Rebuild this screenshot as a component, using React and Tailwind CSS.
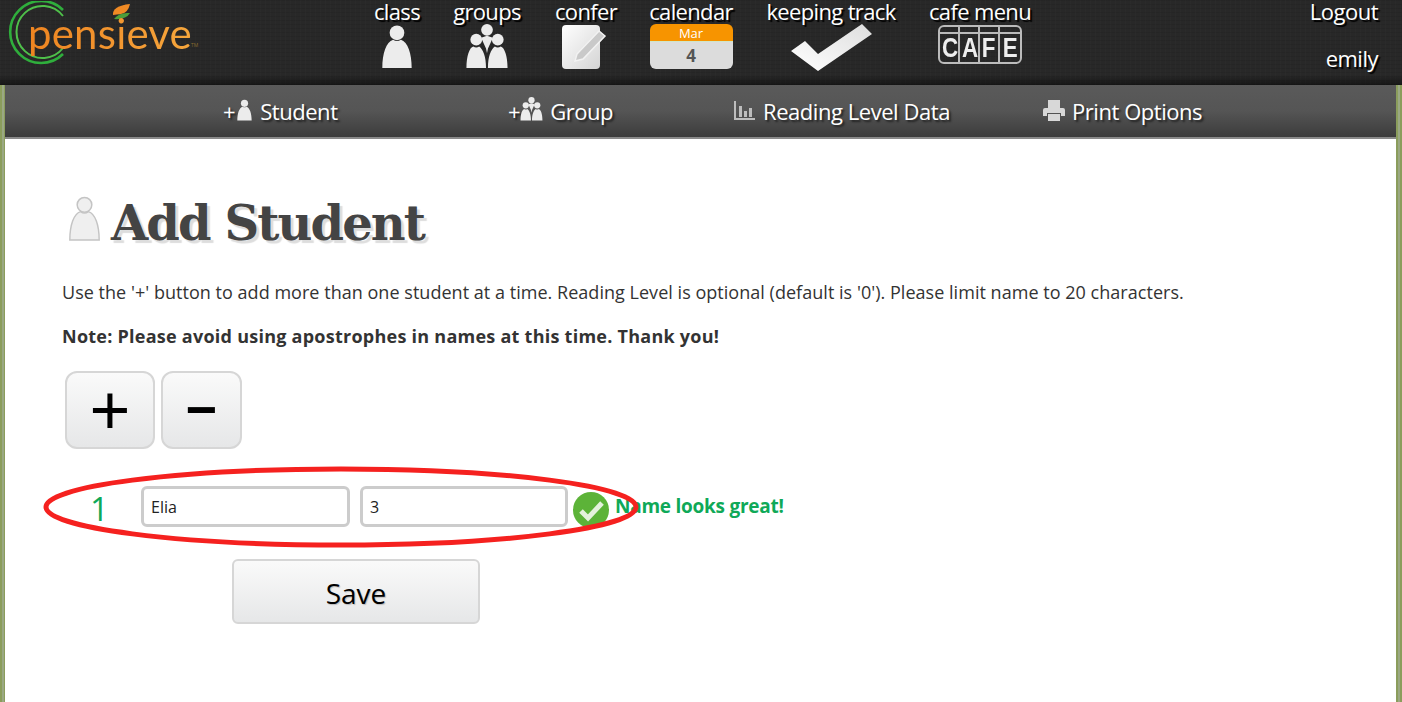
import React from 'react';

const Person = ({ className, fill = '#ececec', stroke = 'none' }) => (
    <svg viewBox="0 0 32 46" className={className}>
        <circle cx="16" cy="9" r="7.5" fill={fill} stroke={stroke} strokeWidth="1.5" />
        <path d="M1 45 C1 30 5 18 12 16 Q16 19 20 16 C27 18 31 30 31 45 Z" fill={fill} stroke={stroke} strokeWidth="1.5" />
    </svg>
);

const Group = ({ className }) => (
    <svg viewBox="0 0 44 46" className={className} fill="#ececec">
        <circle cx="22" cy="6" r="6" />
        <circle cx="11" cy="16" r="6" />
        <circle cx="33" cy="16" r="6" />
        <path d="M16 14 L22 12 L28 14 L23 25 L22 30 L21 25 Z" />
        <path d="M1 45 C1 33 4 24 8 23 Q11 25 14 23 C18 26 21 33 21 45 Z" />
        <path d="M23 45 C23 33 26 26 30 23 Q33 25 36 23 C40 24 43 33 43 45 Z" />
    </svg>
);

const Note = () => (
    <svg viewBox="0 0 48 46" className="w-[48px] h-[46px]">
        <defs>
            <linearGradient id="noteFill" x1="0" y1="0" x2="1" y2="1">
                <stop offset="0" stopColor="#ffffff" />
                <stop offset="1" stopColor="#d4d4d4" />
            </linearGradient>
        </defs>
        <rect x="0" y="1" width="38" height="44" rx="4" fill="url(#noteFill)" />
        <path d="M15 30 L37 7 L43 12 L21 35 L13 37 Z" fill="#c9c9c9" stroke="#f2f2f2" strokeWidth="1.5" />
    </svg>
);

const Check = () => (
    <svg viewBox="0 0 82 48" className="w-[82px] h-[48px]">
        <defs>
            <linearGradient id="checkFill" x1="0" y1="1" x2="1" y2="0">
                <stop offset="0" stopColor="#ffffff" />
                <stop offset="1" stopColor="#dedede" />
            </linearGradient>
        </defs>
        <path d="M1 27 L15 17 L28 30 L72 0 L82 10 L28 47 Z" fill="url(#checkFill)" />
    </svg>
);

const CafeSign = () => (
    <div className="w-[84px] h-[39px] rounded-md border-2 border-[#bbb] flex flex-col overflow-hidden mt-[1px] [text-shadow:none]">
        <div className="h-[7px] grid grid-cols-4 border-b-2 border-[#bbb]">
            <span className="border-r-2 border-[#bbb]" />
            <span className="border-r-2 border-[#bbb]" />
            <span className="border-r-2 border-[#bbb]" />
            <span />
        </div>
        <div className="flex-1 grid grid-cols-4 text-[#eee] text-[28px] leading-[27px] font-bold text-center font-['Liberation_Sans',sans-serif]">
            <span className="border-r-2 border-[#bbb]"><span className="inline-block scale-x-[0.8]">C</span></span>
            <span className="border-r-2 border-[#bbb]"><span className="inline-block scale-x-[0.8]">A</span></span>
            <span className="border-r-2 border-[#bbb]"><span className="inline-block scale-x-[0.8]">F</span></span>
            <span><span className="inline-block scale-x-[0.8]">E</span></span>
        </div>
    </div>
);

const CalendarTile = () => (
    <div className="w-[83px] h-[45px] rounded-md overflow-hidden flex flex-col text-center [text-shadow:none]">
        <div className="h-[18px] bg-[#f79400] border-b border-[#cfe6c8] text-white text-[13px] leading-[18px]">Mar</div>
        <div className="flex-1 bg-[#dcdcdc] text-[#555] text-[17px] leading-[27px] font-bold">4</div>
    </div>
);

const navItems = [
    { label: 'class', width: 'w-[80px]', icon: <Person className="w-[32px] h-[45px]" /> },
    { label: 'groups', width: 'w-[100px]', icon: <Group className="w-[44px] h-[45px]" /> },
    { label: 'confer', width: 'w-[98px]', icon: <Note /> },
    { label: 'calendar', width: 'w-[112px]', icon: <CalendarTile /> },
    { label: 'keeping track', width: 'w-[168px]', icon: <Check /> },
    { label: 'cafe menu', width: 'w-[130px]', icon: <CafeSign /> },
];

const BarChart = () => (
    <svg viewBox="0 0 22 20" className="w-[22px] h-[20px]" fill="#bdbdbd">
        <path d="M1 0 H3 V17 H22 V19 H1 Z" />
        <rect x="6" y="5" width="3" height="11" />
        <rect x="11" y="10" width="3" height="6" />
        <rect x="16" y="7" width="3" height="9" />
    </svg>
);

const Printer = () => (
    <svg viewBox="0 0 22 22" className="w-[22px] h-[22px]" fill="#d8d8d8">
        <rect x="5" y="0" width="12" height="8" />
        <path d="M2 8 H20 Q22 8 22 10 V16 H18 V13 H4 V16 H0 V10 Q0 8 2 8 Z" />
        <rect x="5" y="14" width="12" height="7" />
    </svg>
);

const Logo = () => (
    <div className="relative w-[200px] h-[66px] ml-[8px] mt-[1px] [text-shadow:none]">
        <svg viewBox="0 0 200 66" className="absolute inset-0 w-full h-full" fill="none">
            <path d="M55 9 A31 31 0 1 0 55 53" stroke="#2fae3c" strokeWidth="2.6" />
            <path d="M55 15 A26 26 0 1 0 55 47" stroke="#4fc04a" strokeWidth="2" />
            <path d="M105 14 Q104 5 122 3 Q120 12 113 13 Z" fill="#f08a24" />
            <path d="M106 18 Q111 11 122 12 Q118 19 106 18 Z" fill="#4b9e3a" />
        </svg>
        <span className="absolute left-[20px] top-[8px] text-[42px] leading-[48px] tracking-[0.2px] text-transparent bg-clip-text bg-gradient-to-r from-[#ee8420] to-[#f5a63c] font-['Lato',sans-serif]">pensieve</span>
        <span className="absolute left-[183px] top-[41px] text-[5px] text-[#8a6a30]">TM</span>
    </div>
);

const App = () => {
    return (
        <div className="h-[702px] overflow-hidden flex flex-col bg-[#8d9d62] bg-[repeating-linear-gradient(90deg,#8b9d5c_0_2px,#9aa883_2px_4px)] font-['Open_Sans',sans-serif]">
            <header className="h-[85px] shrink-0 flex bg-[#282828] bg-[linear-gradient(180deg,transparent_88%,rgba(0,0,0,0.45)_100%),repeating-linear-gradient(90deg,rgba(255,255,255,0.012)_0_1px,transparent_1px_5px),repeating-linear-gradient(0deg,rgba(0,0,0,0.07)_0_1px,transparent_1px_4px)] text-white [text-shadow:2px_2px_1px_#000]">
                <div className="w-[357px] shrink-0">
                    <Logo />
                </div>
                <nav className="flex">
                    {navItems.map((item) => (
                        <div key={item.label} className={`${item.width} flex flex-col items-center`}>
                            <span className="text-[22px] leading-[22px] tracking-[-0.65px] whitespace-nowrap">{item.label}</span>
                            <div className="h-[50px] pt-[2px] flex items-start">{item.icon}</div>
                        </div>
                    ))}
                </nav>
                <div className="ml-auto pr-[24px] flex flex-col items-end gap-[24px] text-[22px] leading-[23px] tracking-[-0.5px]">
                    <span>Logout</span>
                    <span>emily</span>
                </div>
            </header>

            <div className="flex-1 flex flex-col ml-[5px] mr-[6px] min-h-0">
                <div className="h-[54px] shrink-0 flex items-center pl-[218px] bg-gradient-to-b from-[#5a5a5a] via-[#555] to-[#3c3c3c] border-b-2 border-[#8a8a8a] text-white text-[22px] tracking-[-0.45px] [text-shadow:2px_2px_2px_#222]">
                    <div className="w-[285px] flex items-center">
                        <span>+</span>
                        <Person className="w-[17px] h-[22px] mr-[7px] ml-[1px] -mt-[3px]" />
                        <span>Student</span>
                    </div>
                    <div className="w-[225px] flex items-center">
                        <span>+</span>
                        <Group className="w-[23px] h-[24px] mr-[7px] -mt-[4px]" />
                        <span>Group</span>
                    </div>
                    <div className="w-[310px] flex items-center gap-[8px]">
                        <BarChart />
                        <span>Reading Level Data</span>
                    </div>
                    <div className="flex items-center gap-[7px]">
                        <Printer />
                        <span>Print Options</span>
                    </div>
                </div>

                <main className="relative flex-1 bg-white pl-[57px] text-[#333]">
                    <div className="flex items-start mt-[55px] h-[58px]">
                        <Person className="w-[33px] h-[45px] ml-[6px] mt-[2px]" fill="#efefef" stroke="#c4c4c4" />
                        <h1 className="ml-[10px] text-[48px] leading-[58px] font-bold text-[#444] tracking-[-1.9px] font-['DejaVu_Serif',serif] [text-shadow:3px_3px_1px_#ddd]">Add Student</h1>
                    </div>
                    <p className="mt-[28px] text-[18px] leading-[24px] tracking-[0.03px] whitespace-nowrap">Use the '+' button to add more than one student at a time. Reading Level is optional (default is '0'). Please limit name to 20 characters.</p>
                    <p className="mt-[20px] text-[18px] leading-[24px] font-bold tracking-[0.25px] whitespace-nowrap">Note: Please avoid using apostrophes in names at this time. Thank you!</p>

                    <div className="flex gap-[6px] mt-[23px] ml-[3px]">
                        <button className="w-[90px] h-[78px] rounded-[12px] border-2 border-[#d6d6d6] bg-gradient-to-b from-[#fafafa] to-[#e6e7e8] text-black text-[70px] leading-none font-['Liberation_Sans',sans-serif]">+</button>
                        <button className="w-[81px] h-[78px] rounded-[12px] border-2 border-[#d6d6d6] bg-gradient-to-b from-[#fafafa] to-[#e6e7e8] text-black text-[54px] leading-none font-bold font-['Liberation_Sans',sans-serif] pb-[2px]">{'\u2212'}</button>
                    </div>

                    <div className="flex items-center mt-[37px] h-[41px]">
                        <span className="w-[79px] pl-[28px] text-[#0fa958] text-[33px] leading-none pt-[3px]">1</span>
                        <input readOnly value="Elia" className="w-[209px] h-[41px] px-[7px] rounded-md border-[3px] border-[#ccc] text-[16px] text-[#222] outline-none" />
                        <input readOnly value="3" className="w-[208px] h-[41px] ml-[10px] px-[7px] rounded-md border-[3px] border-[#ccc] text-[16px] text-[#222] outline-none" />
                        <svg viewBox="0 0 36 36" className="w-[36px] h-[36px] ml-[5px] mt-[6px] shrink-0">
                            <circle cx="18" cy="18" r="18" fill="#5cb338" />
                            <path d="M8 19 L15 26 L29 11" fill="none" stroke="#e4f2dc" strokeWidth="5" />
                        </svg>
                        <span className="ml-[6px] text-[19px] font-bold text-[#0fa958] tracking-[-0.25px] whitespace-nowrap">Name looks great!</span>
                    </div>

                    <button className="block w-[248px] h-[65px] ml-[170px] mt-[32px] rounded-md border-2 border-[#d6d6d6] bg-gradient-to-b from-[#fafafa] to-[#e6e7e8] text-black text-[28px] pt-[3px] [text-shadow:1px_1px_1px_#bbb]">Save</button>

                    {/* red marker ring drawn over the screenshot */}
                    <svg viewBox="0 0 600 84" className="absolute left-[36px] top-[326px] w-[600px] h-[84px] pointer-events-none" fill="none">
                        <ellipse cx="300" cy="42" rx="295" ry="38" stroke="#f5211f" strokeWidth="5" />
                    </svg>
                </main>
            </div>
        </div>
    );
};

export default App;
